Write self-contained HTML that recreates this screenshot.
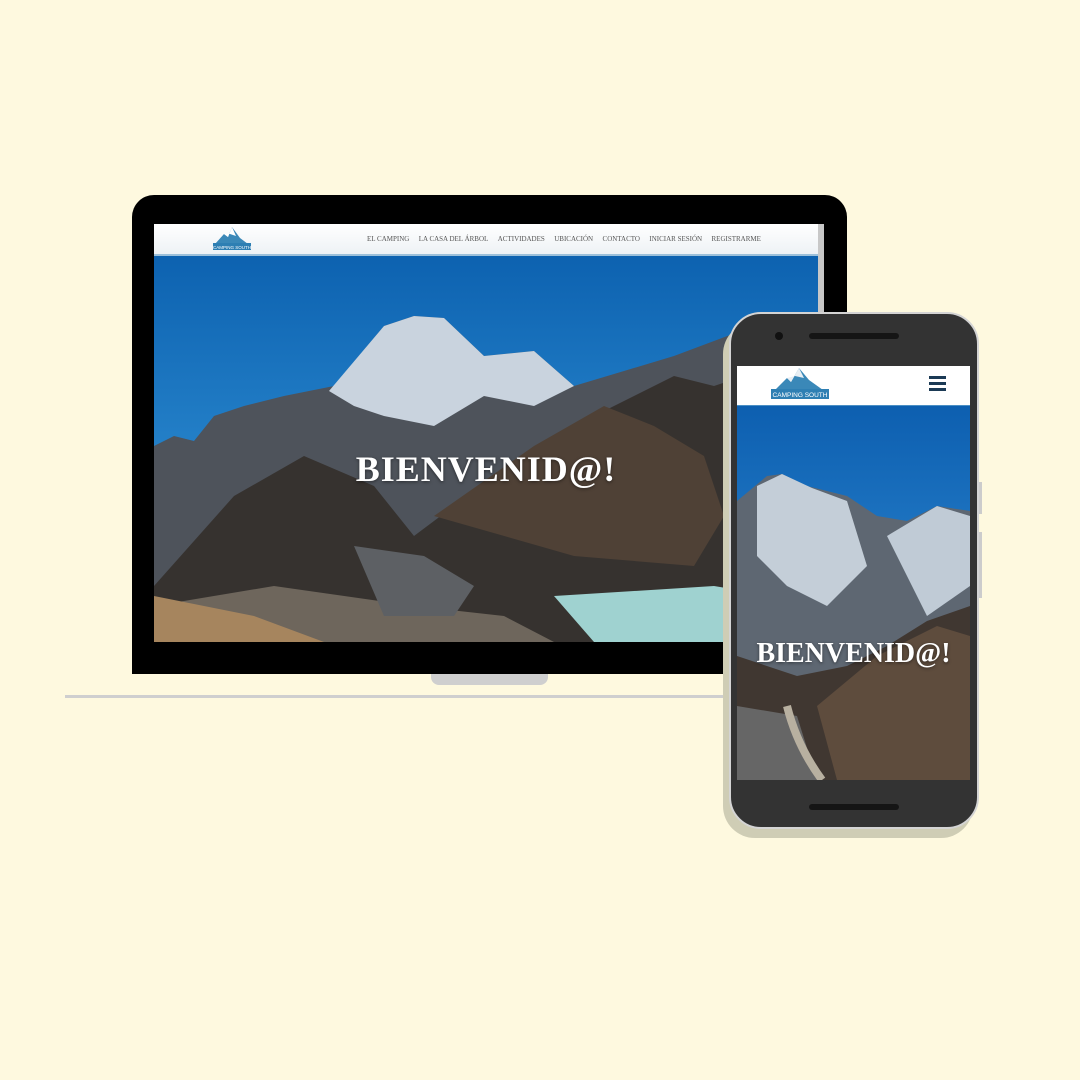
<!DOCTYPE html>
<html><head><meta charset="utf-8"><style>
body{margin:0;width:1080px;height:1080px;background:#fef9df;position:relative;overflow:hidden;font-family:"Liberation Serif",serif}
.abs{position:absolute}
</style></head><body>
<!-- laptop -->
<div class="abs" style="left:65px;top:695px;width:680px;height:3px;background:#cfcfcf"></div>
<div class="abs" style="left:431px;top:670px;width:117px;height:15px;background:#cfcfcf;border-radius:0 0 8px 8px"></div>
<div class="abs" style="left:132px;top:195px;width:715px;height:479px;background:#000;border-radius:22px 22px 0 0"></div>
<div class="abs" style="left:154px;top:224px;width:670px;height:418px;background:#ddd;overflow:hidden">
 <div class="abs" style="left:0;top:0;width:664px;height:30px;background:linear-gradient(#fff,#eef2f5);border-bottom:2px solid #9cc0da"></div>
 <div class="abs" style="left:664px;top:0;width:6px;height:418px;background:#c8c8c8"></div>
 <svg class="abs" style="left:58px;top:2px" width="40" height="26" viewBox="0 0 40 26"><polygon points="3,18 12,8 16,11 20,1 28,12 36,18" fill="#3a88b8"/><polygon points="12,8 16,11 20,1 24,10 18,8" fill="#fff"/><rect x="1" y="17" width="38" height="7" fill="#2e7fb3"/><text x="20" y="23" font-size="4.5" fill="#fff" text-anchor="middle" font-family="Liberation Sans">CAMPING SOUTH</text></svg>
 <div class="abs" style="left:213px;top:11px;width:394px;font-size:7px;color:#555;white-space:nowrap;display:flex;justify-content:space-between"><span>EL CAMPING</span><span>LA CASA DEL ÁRBOL</span><span>ACTIVIDADES</span><span>UBICACIÓN</span><span>CONTACTO</span><span>INICIAR SESIÓN</span><span>REGISTRARME</span></div>
 <svg class="abs" style="left:0;top:32px" width="664" height="386" viewBox="0 0 664 386">
  <defs><linearGradient id="sky" x1="0" y1="0" x2="0" y2="1"><stop offset="0" stop-color="#0d62b0"/><stop offset="1" stop-color="#3a9ee0"/></linearGradient></defs>
  <rect width="664" height="386" fill="url(#sky)"/>
  <polygon points="0,190 20,180 40,185 60,160 90,150 130,140 180,130 230,70 260,60 290,62 330,100 380,95 420,130 470,115 520,100 560,85 600,70 664,60 664,386 0,386" fill="#4e535b"/>
  <polygon points="175,135 230,70 260,60 290,62 330,100 380,95 420,130 380,150 330,140 280,170 230,160 200,150" fill="#c9d3de"/>
  <polygon points="0,330 80,240 150,200 220,230 260,280 300,250 350,220 420,170 480,140 520,120 560,130 620,110 664,100 664,386 0,386" fill="#36322f"/>
  <polygon points="280,260 380,190 450,150 500,170 550,200 570,260 540,310 420,300" fill="#4f4136"/>
  <polygon points="0,350 120,330 260,350 350,360 400,386 0,386" fill="#6e665c"/>
  <polygon points="0,340 100,360 170,386 0,386" fill="#a6855e"/>
  <polygon points="400,340 480,335 560,330 620,340 664,345 664,386 440,386" fill="#9fd2d0"/>
  <polygon points="200,290 270,300 320,330 300,360 230,360" fill="#5d6064"/>
 </svg>
 <div class="abs" style="left:0;top:224px;width:664px;text-align:center;color:#fff;font-size:36px;font-weight:bold;letter-spacing:1px;text-shadow:0 1px 3px rgba(0,0,0,.5)">BIENVENID@!</div>
</div>
<!-- phone -->
<div class="abs" style="left:723px;top:322px;width:250px;height:516px;background:#cfcdb5;border-radius:32px"></div>
<div class="abs" style="left:977px;top:482px;width:5px;height:32px;background:#ccc"></div>
<div class="abs" style="left:977px;top:532px;width:5px;height:66px;background:#ccc"></div>
<div class="abs" style="left:729px;top:312px;width:246px;height:513px;background:#333;border:2px solid #d4d4d4;border-radius:32px"></div>
<div class="abs" style="left:775px;top:332px;width:8px;height:8px;background:#111;border-radius:50%"></div>
<div class="abs" style="left:809px;top:333px;width:90px;height:6px;background:#151515;border-radius:3px"></div>
<div class="abs" style="left:809px;top:804px;width:90px;height:6px;background:#151515;border-radius:3px"></div>
<div class="abs" style="left:737px;top:366px;width:233px;height:414px;overflow:hidden;background:#333">
 <div class="abs" style="left:0;top:0;width:233px;height:39px;background:#fff;border-bottom:1px solid #4a8fc4"></div>
 <svg class="abs" style="left:32px;top:0px" width="62" height="36" viewBox="0 0 62 36"><polygon points="6,24 18,12 22,16 30,2 40,14 54,24" fill="#3a88b8"/><polygon points="18,12 22,16 30,2 35,12 26,10" fill="#e8eef3"/><rect x="2" y="23" width="58" height="10" fill="#2e7fb3"/><text x="31" y="31" font-size="6.5" fill="#fff" text-anchor="middle" font-family="Liberation Sans">CAMPING SOUTH</text></svg>
 <div class="abs" style="left:192px;top:10px;width:17px;height:3px;background:#1b3a55;box-shadow:0 6px 0 #1b3a55,0 12px 0 #1b3a55"></div>
 <svg class="abs" style="left:0;top:40px" width="233" height="374" viewBox="0 0 233 374">
  <defs><linearGradient id="sky2" x1="0" y1="0" x2="0" y2="1"><stop offset="0" stop-color="#0d5fb0"/><stop offset="1" stop-color="#3d9be0"/></linearGradient></defs>
  <rect width="233" height="374" fill="url(#sky2)"/>
  <polygon points="0,95 30,70 45,68 70,80 110,90 140,110 170,115 200,100 233,105 233,374 0,374" fill="#5e6772"/>
  <polygon points="20,80 45,68 75,82 110,95 130,160 90,200 50,180 20,150" fill="#c4ced8"/>
  <polygon points="150,130 200,100 233,110 233,180 190,210" fill="#c0cbd6"/>
  <polygon points="0,250 60,270 110,260 150,240 190,215 233,200 233,374 0,374" fill="#403731"/>
  <polygon points="80,300 140,250 200,220 233,230 233,374 100,374" fill="#5e4c3d"/>
  <polygon points="0,300 60,310 80,374 0,374" fill="#666"/>
  <path d="M50,300 Q60,340 85,374" stroke="#b8b0a0" stroke-width="8" fill="none"/>
 </svg>
 <div class="abs" style="left:0;top:272px;width:233px;text-align:center;color:#fff;font-size:28px;font-weight:bold;text-shadow:0 1px 3px rgba(0,0,0,.5)">BIENVENID@!</div>
</div>
</body></html>
